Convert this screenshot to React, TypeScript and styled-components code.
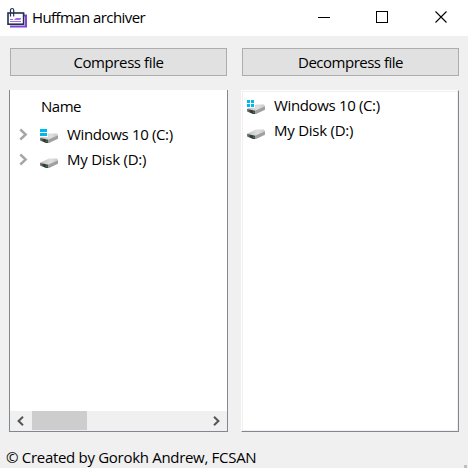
import React from "react";
import styled, { createGlobalStyle } from "styled-components";

const GlobalStyle = createGlobalStyle`
  * { box-sizing: border-box; }
  body { margin: 0; background: #f0f0f0; }
`;

const Window = styled.div`
  width: 468px;
  height: 468px;
  overflow: hidden;
  display: flex;
  flex-direction: column;
  background: #f0f0f0;
  color: #000;
  font: 15px/20px "Open Sans", "Noto Sans", sans-serif;
`;

const TitleBar = styled.header`
  height: 36px;
  flex: none;
  display: flex;
  align-items: center;
  background: #fff;
  padding-left: 6px;
`;

const Label = styled.span<{ $spacing: number }>`
  white-space: pre;
  letter-spacing: ${(p) => p.$spacing}px;
`;

const Title = styled(Label)`
  margin: 0 0 2px 4px;
  flex: 1;
`;

const DriveName = styled(Label)`
  margin-bottom: 2px;
`;

const Controls = styled.div`
  display: flex;
  padding: 0 19px 2px 0;
`;

const WindowGlyph = styled.svg<{ $gap?: number }>`
  width: 14px;
  height: 14px;
  margin-right: ${(p) => p.$gap ?? 0}px;
`;

const Columns = styled.main`
  display: grid;
  grid-template-columns: 219px 218px;
  column-gap: 13px;
  padding: 12px 0 0 9px;
  flex: none;
`;

const Column = styled.section`
  display: flex;
  flex-direction: column;
  gap: 14px;
`;

const ActionButton = styled.button`
  height: 28px;
  width: 217px;
  margin: 0 0 0 1px;
  padding: 0 0 1px;
  border: 1px solid #adadad;
  background: #e1e1e1;
  color: #000;
  font: inherit;
  display: flex;
  align-items: center;
  justify-content: center;
`;

const TreePanel = styled.div`
  height: 342px;
  display: flex;
  flex-direction: column;
  background: #fff;
  border: 1px solid #828790;
  border-top: 0;
`;

const TreeHeader = styled.div`
  height: 32px;
  padding: 6px 0 0 31px;
`;

const TreeRow = styled.div`
  height: 25px;
  display: flex;
  align-items: center;
  padding-left: 9px;
`;

const Chevron = styled.svg`
  width: 9px;
  height: 13px;
  margin-right: 12px;
  flex: none;
`;

const DriveSvg = styled.svg`
  width: 19px;
  height: 19px;
  margin: 6px 8px 0 0;
  flex: none;
`;

const ScrollBar = styled.div`
  height: 20px;
  margin-top: auto;
  display: flex;
  background: #f0f0f0;
`;

const ScrollArrow = styled.div`
  width: 22px;
  display: flex;
  align-items: center;
  justify-content: center;
`;

const Track = styled.div`
  flex: 1;
`;

const Thumb = styled.div`
  width: 55px;
  height: 19px;
  background: #cdcdcd;
`;

const ListFrame = styled.div`
  height: 342px;
  border: 1px solid #fff;
  border-right-color: #828790;
  border-bottom-color: #828790;
`;

const ListPanel = styled.div`
  height: 100%;
  background: #fff;
  border: 1px solid #f0f0f0;
  padding-top: 1px;
`;

const ListRow = styled.div`
  height: 25px;
  display: flex;
  align-items: center;
  padding-left: 4px;
`;

const StatusBar = styled.footer`
  flex: 1;
  display: flex;
  justify-content: space-between;
  align-items: flex-end;
  padding: 0 1px 0 6px;
`;

const StatusText = styled.div`
  height: 21px;
`;

const Grip = styled.div`
  width: 3px;
  height: 3px;
  background: #bfbfbf;
`;

function AppIcon() {
  return (
    <svg width="22" height="22" viewBox="0 0 22 22" fill="none">
      <path d="M4 19.5H20V8.5H18" stroke="#8141d4" strokeWidth="2" />
      <rect x="2" y="6" width="15.6" height="11.2" fill="#fff" stroke="#20304e" strokeWidth="1.6" />
      <path d="M9.5 11.5h5.5M4 12.5h3m1.5 0h6M4 14.5h11" stroke="#a46be6" strokeWidth="1" />
      <path d="M4.5 9.5V3.2c0-2.3 3.2-2.3 3.2 0V9.5" stroke="#20304e" strokeWidth="1.2" />
    </svg>
  );
}

function DriveIcon({ logo }: { logo?: "bars" | "tiles" }) {
  return (
    <DriveSvg viewBox="0 0 19 19">
      <defs>
        <linearGradient id="driveTop" x1="0" y1="0" x2="1" y2="0">
          <stop offset="0" stopColor="#c0c0c0" />
          <stop offset=".6" stopColor="#e0e0e0" />
          <stop offset="1" stopColor="#c8c8c8" />
        </linearGradient>
        <linearGradient id="driveFront" x1="0" y1="0" x2="1" y2="0">
          <stop offset="0" stopColor="#808080" />
          <stop offset=".5" stopColor="#333" />
          <stop offset="1" stopColor="#444" />
        </linearGradient>
      </defs>
      <path d="M7 11 18 7v3.8L9 15H7z" fill="#a0a0a0" />
      <path d="M0 9.8 9 5.4h8l1 1.8-10 4.6z" fill="url(#driveTop)" />
      <path d="M0 9.8l8 2V15H6l-6-2.6z" fill="url(#driveFront)" />
      <path d="M6 12.6h1.6V14H6z" fill="#238c38" />
      {logo && <path d="M0 0h8v9H0z" fill="#fff" />}
      {logo === "bars" && <path d="M0 1h7v3H0zM0 5h7v3H0z" fill="#00b7ee" />}
      {logo === "tiles" && (
        <path d="M0 1h3v3H0zM4 1h3v3H4zM0 5h3v3H0zM4 5h3v3H4z" fill="#00b7ee" />
      )}
    </DriveSvg>
  );
}

function Expander() {
  return (
    <Chevron viewBox="0 0 9 13" fill="none">
      <path d="M1.3 1.5 6.7 6.5 1.3 11.5" stroke="#a6a6a6" strokeWidth="2.4" />
    </Chevron>
  );
}

const drives = [
  { name: "Windows 10 (C:)", system: true, spacing: -0.35 },
  { name: "My Disk (D:)", system: false, spacing: -0.25 },
];

export default function App() {
  return (
    <Window>
      <GlobalStyle />
      <TitleBar>
        <AppIcon />
        <Title $spacing={-0.58}>Huffman archiver</Title>
        <Controls>
          <WindowGlyph $gap={44} shapeRendering="crispEdges">
            <path d="M0 7h12v1H0z" />
          </WindowGlyph>
          <WindowGlyph $gap={45} shapeRendering="crispEdges" fill="none">
            <path d="M.5 1.5h11v11H.5z" stroke="#000" />
          </WindowGlyph>
          <WindowGlyph fill="none">
            <path d="M.5 1.5l11 11m0-11l-11 11" stroke="#000" strokeWidth="1.1" />
          </WindowGlyph>
        </Controls>
      </TitleBar>
      <Columns>
        <Column>
          <ActionButton><Label $spacing={-0.4}>Compress file</Label></ActionButton>
          <TreePanel>
            <TreeHeader><Label $spacing={-0.5}>Name</Label></TreeHeader>
            {drives.map((d) => (
              <TreeRow key={d.name}>
                <Expander />
                <DriveIcon logo={d.system ? "bars" : undefined} />
                <DriveName $spacing={d.spacing}>{d.name}</DriveName>
              </TreeRow>
            ))}
            <ScrollBar>
              <ScrollArrow>
                <svg width="10" height="10" fill="none">
                  <path d="M7 .8 2.6 5 7 9.2" stroke="#555" strokeWidth="2" />
                </svg>
              </ScrollArrow>
              <Track><Thumb /></Track>
              <ScrollArrow>
                <svg width="10" height="10" fill="none">
                  <path d="M3 .8 7.4 5 3 9.2" stroke="#555" strokeWidth="2" />
                </svg>
              </ScrollArrow>
            </ScrollBar>
          </TreePanel>
        </Column>
        <Column>
          <ActionButton><Label $spacing={-0.5}>Decompress file</Label></ActionButton>
          <ListFrame>
            <ListPanel>
              {drives.map((d) => (
                <ListRow key={d.name}>
                  <DriveIcon logo={d.system ? "tiles" : undefined} />
                  <DriveName $spacing={d.spacing}>{d.name}</DriveName>
                </ListRow>
              ))}
            </ListPanel>
          </ListFrame>
        </Column>
      </Columns>
      <StatusBar>
        <StatusText><Label $spacing={-0.3}>© Created by Gorokh Andrew, FCSAN</Label></StatusText>
        <Grip />
      </StatusBar>
    </Window>
  );
}
